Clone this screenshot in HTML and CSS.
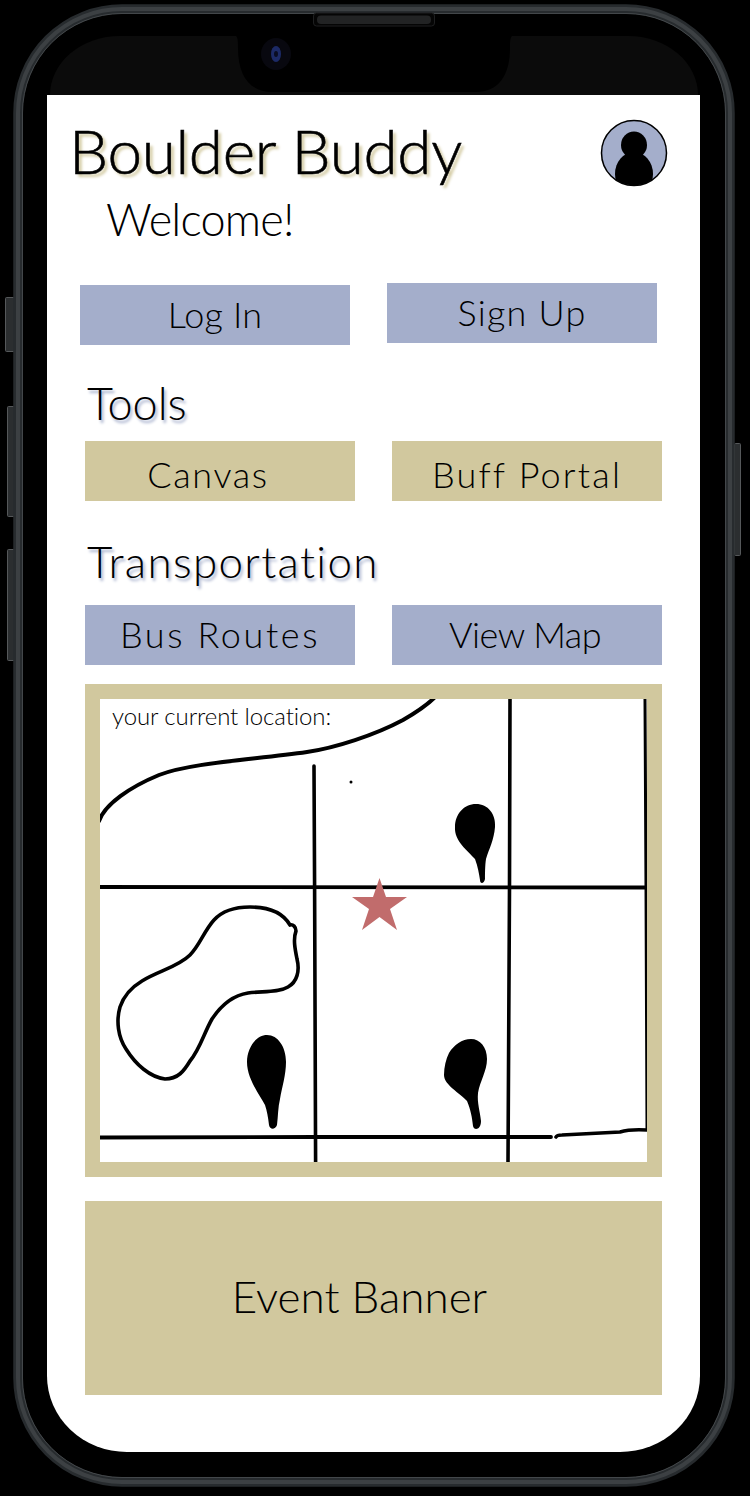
FILE: index.html
```html
<!DOCTYPE html>
<html lang="en">
<head>
<meta charset="utf-8">
<title>Boulder Buddy</title>
<link rel="stylesheet" href="styles.css">
</head>
<body>
<div class="phone">
  <div class="status-bar"></div>
  <main class="screen">
    <header class="header">
      <div class="titles">
        <h1 class="title">Boulder Buddy</h1>
        <p class="welcome">Welcome!</p>
      </div>
      <svg class="avatar" viewBox="0 0 68 68" aria-label="profile">
        <defs><clipPath id="avatar-clip"><circle cx="34" cy="34" r="32.5"/></clipPath></defs>
        <circle cx="34" cy="34" r="32.5" fill="#a4aecb"/>
        <g clip-path="url(#avatar-clip)">
          <ellipse cx="34" cy="26" rx="13" ry="13.5" fill="#000"/>
          <ellipse cx="34" cy="55" rx="19" ry="22" fill="#000"/>
        </g>
        <circle cx="34" cy="34" r="32.5" fill="none" stroke="#000" stroke-width="1.5"/>
      </svg>
    </header>

    <div class="btn-row btn-row-auth">
      <a class="btn btn-blue btn-login">Log In</a>
      <a class="btn btn-blue btn-signup">Sign Up</a>
    </div>

    <h2 class="section section-tools">Tools</h2>
    <div class="btn-row">
      <a class="btn btn-tan btn-canvas">Canvas</a>
      <a class="btn btn-tan btn-portal">Buff Portal</a>
    </div>

    <h2 class="section section-transport">Transportation</h2>
    <div class="btn-row">
      <a class="btn btn-blue btn-bus">Bus Routes</a>
      <a class="btn btn-blue btn-view">View Map</a>
    </div>

    <section class="map-card">
      <div class="map">
        <svg class="map-art" viewBox="0 0 547 463" aria-label="campus map">
          <g fill="none" stroke="#000" stroke-linecap="round" stroke-linejoin="round">
            <path stroke-width="4" d="M-1 122C5 105 30 88 59 76C90 64 150 61 207 53C235 49 275 36 303 21C315 14 325 8 334 -1"/>
            <path stroke-width="3.6" d="M214 67L214.6 188L215.6 463"/>
            <path stroke-width="3.6" d="M410 0L409.5 188L408 463"/>
            <path stroke-width="3" d="M545 0L546 188L547 430"/>
            <path stroke-width="3.8" d="M0 188L546 188.5"/>
            <path stroke-width="3.8" d="M0 438.5L215 438L451 438"/>
            <path stroke-width="3.6" d="M456 438Q457 436 462 436L520 433Q530 430 547 431"/>
            <path stroke-width="3.6" d="M190 226C193 225 196 228 196 232C193 240 195 250 197 260C200 272 197 283 188 288C178 294 162 292 148 294C135 296 122 305 112 320C104 334 100 350 90 362C84 372 78 380 65 380C50 378 36 366 26 350C18 338 16 322 20 308C24 296 32 288 42 282C58 272 78 268 90 256C100 246 104 232 114 221C124 210 138 208 150 208C165 208 182 212 190 226"/>
          </g>
          <circle cx="251" cy="83" r="1.5" fill="#000"/>
          <path fill="#000" d="M376 105C388 105 396 115 395 128C394 141 389 150 386 160C385 166 385 176 385 180C384 185 380 185 380 181C379 175 378 168 375 160C368 152 354 142 355 128C355 115 364 105 376 105Z"/>
          <path fill="#000" d="M167 336C178 336 186 348 186 363C186 376 182 388 180 400C178 408 178 418 177 426C175 431 170 431 169 426C168 418 167 412 165 406C160 396 147 380 147 363C147 349 156 336 167 336Z"/>
          <path fill="#000" d="M371 340C380 340 387 348 387 360C387 372 380 382 378 394C377 404 380 412 381 422C381 431 374 432 373 427C372 418 371 412 367 402C360 394 344 386 344 376C344 368 346 360 349 354C354 346 362 340 371 340Z"/>
          <polygon fill="#c16c6c" points="279.5,179 286,198 307,198 290,210 297,231 279.5,218 262,231 269,210 252,198 273,198"/>
        </svg>
        <span class="map-label">your current location:</span>
      </div>
    </section>

    <section class="banner">Event Banner</section>
  </main>

  <svg class="frame" viewBox="0 0 750 1496" aria-hidden="true">
    <g fill="#2b2e30" stroke="#55585a" stroke-width="1">
      <rect x="5.5" y="297.5" width="9" height="54" rx="1"/>
      <rect x="7.5" y="406.5" width="7" height="110" rx="1"/>
      <rect x="7.5" y="549.5" width="7" height="111" rx="1"/>
      <rect x="734.5" y="443.5" width="6" height="112" rx="1"/>
    </g>
    <rect x="18" y="9" width="712" height="1473" rx="104" fill="none" stroke="#272b2e" stroke-width="9.5"/>
    <rect x="18" y="9" width="712" height="1473" rx="104" fill="none" stroke="#3c4043" stroke-width="4"/>
    <rect x="22.5" y="13.5" width="703" height="1464" rx="99.5" fill="none" stroke="#55595b" stroke-width="0.7"/>
    <path fill="#000" d="M236 36C238 38 238 42 238 48C238 76 250 92 272 92H476C498 92 510 76 510 48C510 42 510 38 512 36Z"/>
    <rect x="313.5" y="13" width="121" height="13" rx="3" fill="#050505" stroke="#1e1f20"/>
    <rect x="317" y="15.5" width="114" height="8.5" rx="4" fill="#222324"/>
    <ellipse cx="276" cy="54" rx="15" ry="16" fill="#08080f"/>
    <ellipse cx="276" cy="54" rx="5" ry="8" fill="#1c2a66"/>
    <ellipse cx="276" cy="54" rx="2" ry="3" fill="#0a0d22"/>
  </svg>
</div>
</body>
</html>
```

FILE: styles.css
```css
* { box-sizing: border-box; }

html, body {
  margin: 0;
  padding: 0;
  background: #000;
}

.phone {
  position: relative;
  width: 750px;
  height: 1496px;
  padding: 36px 50px 0 47px;
  overflow: hidden;
  background: #000;
  font-family: "Lato", "Open Sans", sans-serif;
  color: #000;
}

.frame {
  position: absolute;
  inset: 0;
  width: 750px;
  height: 1496px;
  pointer-events: none;
}

.status-bar {
  height: 59px;
  margin: 0 2px 0 3px;
  background: #0b0b0b;
  border-radius: 70px 70px 0 0 / 59px 59px 0 0;
}

.screen {
  height: 1357px;
  padding-top: 24px;
  background: #fff;
  border-radius: 0 0 80px 80px / 0 0 76px 76px;
}

.header {
  display: flex;
  justify-content: space-between;
  align-items: flex-start;
  height: 164px;
  padding: 0 32px 0 22px;
}

.title {
  margin: 0;
  font-size: 62px;
  line-height: 62px;
  font-weight: 300;
  letter-spacing: -0.3px;
  white-space: nowrap;
  -webkit-text-stroke: 0.6px #000;
  text-shadow: 3px 3px 3px #d1c89e;
}

.welcome {
  margin: 13px 0 0 37px;
  font-size: 45px;
  line-height: 50px;
  font-weight: 300;
  letter-spacing: -0.8px;
}

.avatar {
  display: block;
  width: 68px;
  height: 68px;
}

.btn-row {
  display: flex;
  gap: 37px;
  padding-left: 38px;
}

.btn-row-auth {
  height: 62px;
  padding-left: 33px;
}

.btn {
  display: flex;
  align-items: center;
  justify-content: center;
  width: 270px;
  height: 60px;
  padding-bottom: 3px;
  font-size: 36px;
  font-weight: 300;
  letter-spacing: 0.6px;
  white-space: nowrap;
}

.btn-login { margin-top: 2px; letter-spacing: 0.2px; }
.btn-signup { letter-spacing: 1.2px; }
.btn-canvas { padding-right: 24px; letter-spacing: 1.6px; }
.btn-portal { letter-spacing: 2.2px; }
.btn-bus { letter-spacing: 2.6px; }
.btn-view { letter-spacing: -0.5px; padding-right: 4px; }
.btn-blue { background: #a4aecb; }
.btn-tan { background: #d1c89e; padding-top: 5px; padding-bottom: 0; }

.section {
  margin: 0 0 0 40px;
  font-weight: 300;
  white-space: nowrap;
  text-shadow: 2px 3px 3px #a4aecb;
}

.section-tools {
  height: 96px;
  padding-top: 33px;
  font-size: 45px;
  line-height: 50px;
}

.section-transport {
  height: 104px;
  padding-top: 33px;
  font-size: 44px;
  line-height: 54px;
  letter-spacing: 1.3px;
}

.map-card {
  width: 577px;
  height: 493px;
  margin: 19px 0 0 38px;
  padding: 15px;
  background: #d1c89e;
}

.map {
  position: relative;
  height: 463px;
  background: #fff;
}

.map-art {
  display: block;
  width: 547px;
  height: 463px;
  overflow: hidden;
}

.map-label {
  position: absolute;
  left: 12px;
  top: 1px;
  font-size: 24px;
  line-height: 32px;
  font-weight: 300;
  letter-spacing: -0.1px;
  white-space: nowrap;
}

.banner {
  display: flex;
  align-items: center;
  justify-content: center;
  width: 577px;
  height: 194px;
  margin: 24px 0 0 38px;
  padding: 0 28px 5px 0;
  background: #d1c89e;
  font-size: 44px;
  font-weight: 300;
}
```
